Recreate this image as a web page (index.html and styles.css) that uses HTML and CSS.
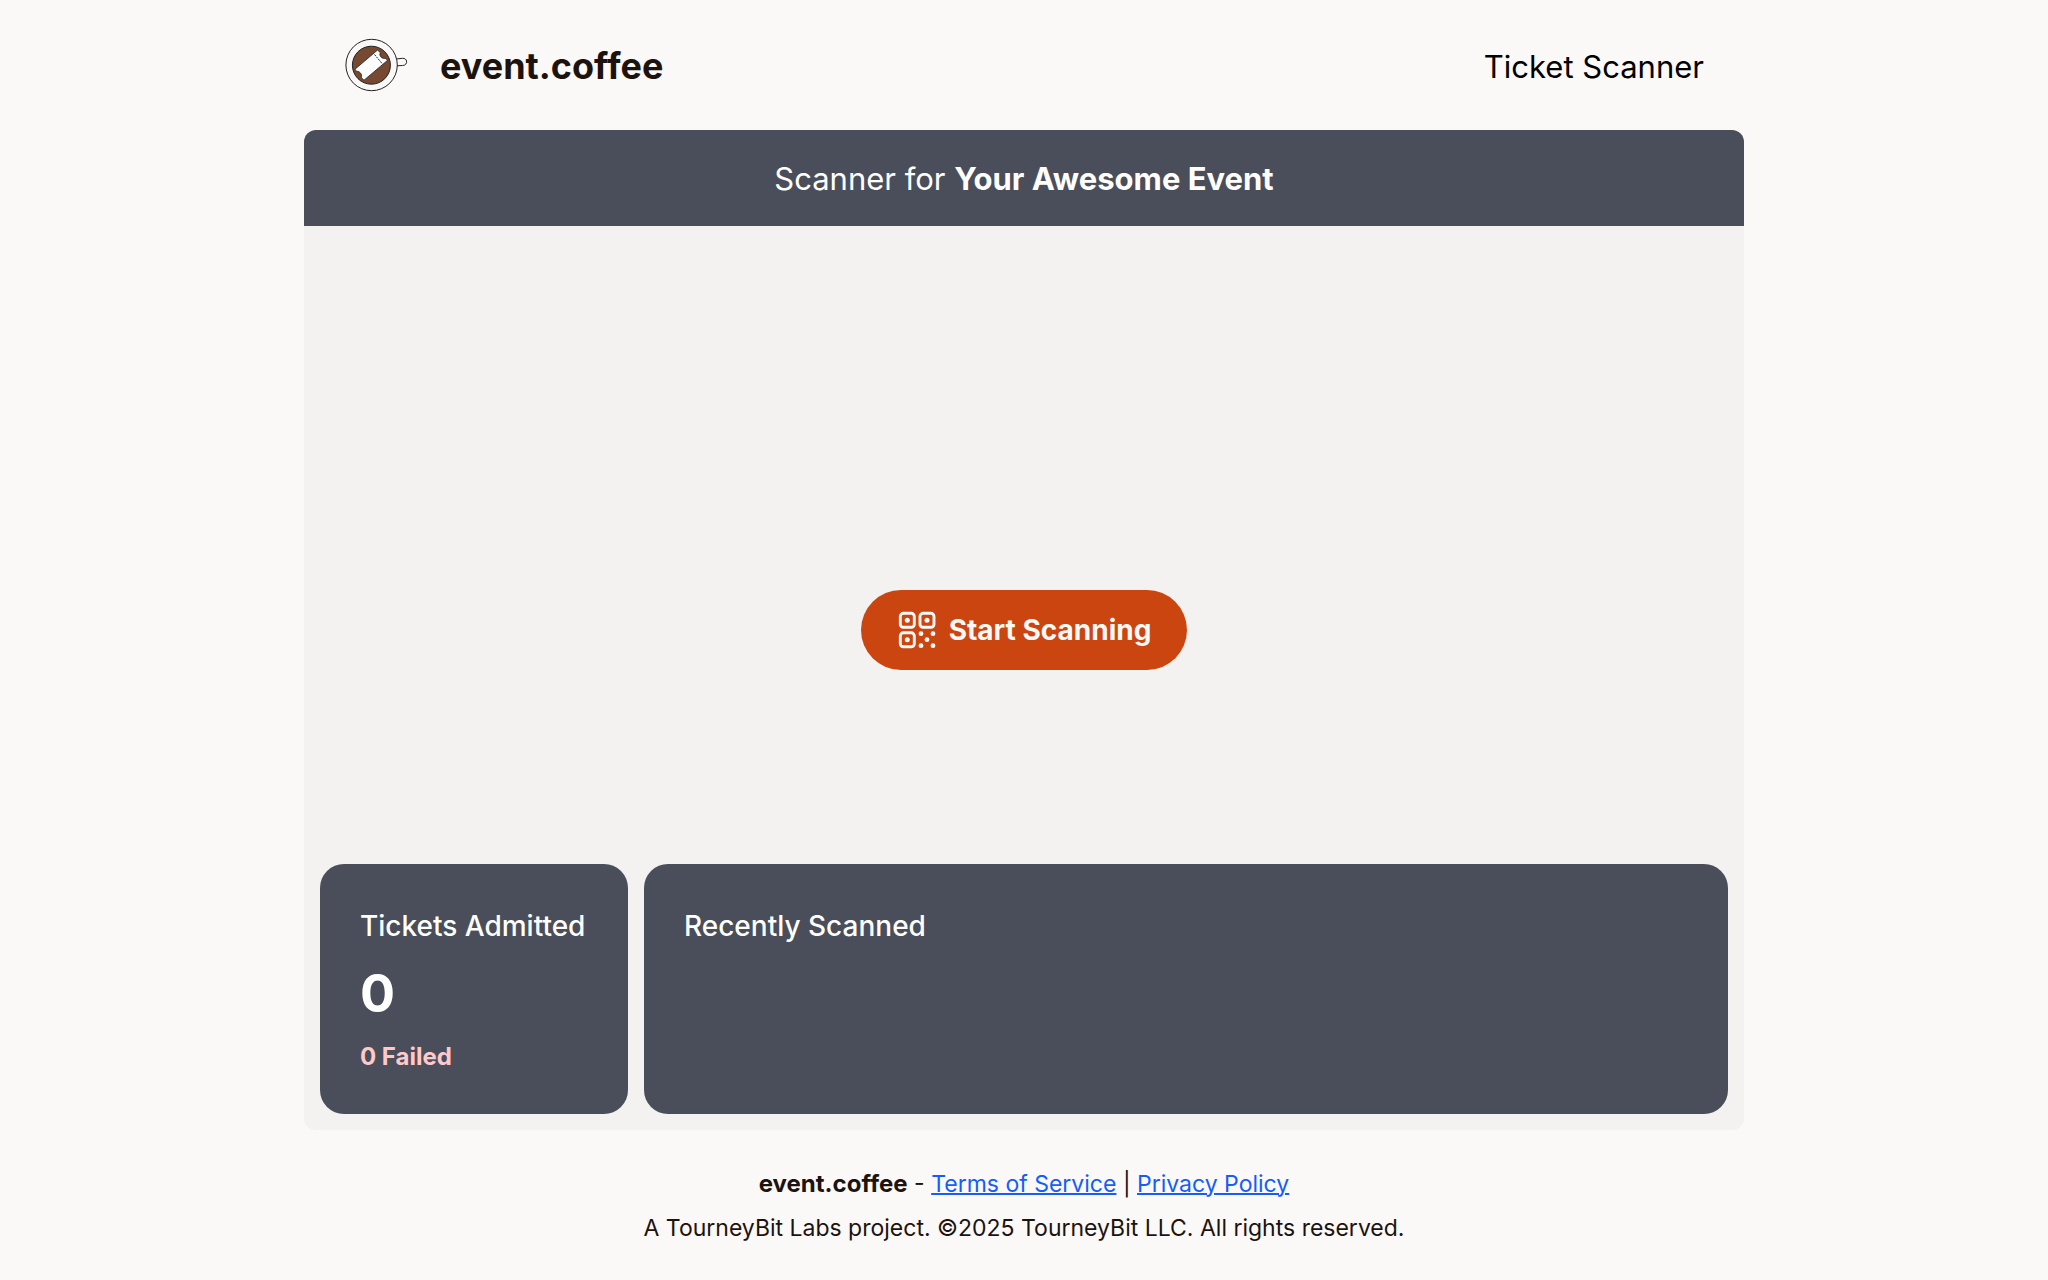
FILE: index.html
```html
<!DOCTYPE html>
<html lang="en">
<head>
  <meta charset="utf-8">
  <meta name="viewport" content="width=device-width, initial-scale=1">
  <title>Ticket Scanner - event.coffee</title>
  <link rel="stylesheet" href="styles.css">
</head>
<body>
  <header class="site-header">
    <div class="brand">
      <svg class="brand-logo" viewBox="0 -1 64 60" fill="none" stroke="#222" aria-hidden="true">
        <path d="M53 21.900L58.500 21.300C64 21 64 28.600 58.500 28.500L53 28.800"/>
        <circle cx="27.600" cy="28" r="25.700"/>
        <circle cx="27.400" cy="28.200" r="19" fill="#774930"/>
        <path d="M33.600 13L11 32.200L12.600 34.400C15 34 18.500 36.500 17.300 40.500L20 43.200L43.300 23.600L42 21.300C38.500 22.500 34.500 19 36.300 15.800Z" fill="#fff" stroke-width=".8"/>
        <path d="M30.500 17.500L38.500 27" stroke-dasharray="2 1"/>
      </svg>
      <span class="brand-name">event.coffee</span>
    </div>
    <span class="page-name">Ticket Scanner</span>
  </header>

  <main class="scanner">
    <h1 class="scanner-title">Scanner for <strong>Your Awesome Event</strong></h1>
    <button class="scan-button" type="button">
      <svg class="scan-icon" viewBox="0 0 40 40" fill="none" stroke="currentColor" stroke-width="2.900" aria-hidden="true">
        <rect x="3.300" y="3.300" width="14" height="14" rx="3"/>
        <rect x="23" y="3.300" width="14" height="14" rx="3"/>
        <rect x="3.300" y="22.800" width="14" height="14" rx="3"/>
        <g fill="currentColor" stroke="none">
          <circle cx="10.300" cy="10.300" r="2.500"/>
          <circle cx="30" cy="10.300" r="2.500"/>
          <circle cx="10.300" cy="29.800" r="2.500"/>
          <circle cx="24" cy="23.700" r="2.400"/>
          <circle cx="36" cy="23.700" r="2.400"/>
          <circle cx="30" cy="29.700" r="2.400"/>
          <circle cx="24" cy="35.700" r="2.400"/>
          <circle cx="36" cy="35.700" r="2.400"/>
        </g>
      </svg>
      Start Scanning
    </button>
    <div class="stats">
      <section class="card">
        <h2 class="card-title">Tickets Admitted</h2>
        <p class="admitted">0</p>
        <p class="failed">0 Failed</p>
      </section>
      <section class="card card-recent">
        <h2 class="card-title">Recently Scanned</h2>
      </section>
    </div>
  </main>

  <footer class="site-footer">
    <p><strong>event.coffee</strong> - <a href="#terms">Terms of Service</a> | <a href="#privacy">Privacy Policy</a></p>
    <p>A TourneyBit Labs project. ©2025 TourneyBit LLC. All rights reserved.</p>
  </footer>
</body>
</html>
```
FILE: styles.css
```css
* {
  box-sizing: border-box;
}

html {
  background: #faf9f7;
}

body {
  display: flex;
  flex-direction: column;
  min-height: 100vh;
  max-width: 1440px;
  margin: 0 auto;
  font-family: Inter, "Open Sans", sans-serif;
  color: #1c130e;
}

h1,
h2,
p {
  margin: 0;
}

.site-header {
  display: flex;
  align-items: center;
  justify-content: space-between;
  padding: 36px 40px 34px;
}

.brand {
  display: flex;
  align-items: center;
  gap: 32px;
}

.brand-logo {
  width: 64px;
  height: 60px;
}

.brand-name {
  font-size: 36px;
  font-weight: 700;
}

.page-name {
  font-size: 31px;
  color: #000;
}

.scanner {
  flex: 1;
  display: grid;
  grid-template-rows: 96px minmax(160px, 1fr) auto;
  border-radius: 12px;
  overflow: hidden;
  background: #f3f2f0;
}

.scanner-title {
  grid-area: 1 / 1;
  padding-top: 2px;
  background: #4a4e5a;
  color: #fff;
  font-size: 31px;
  font-weight: 400;
  line-height: 94px;
  text-align: center;
}

.scan-button {
  grid-area: 1 / 1 / 4 / 2;
  place-self: center;
  display: flex;
  align-items: center;
  gap: 12px;
  height: 80px;
  padding: 0 36px;
  border: 0;
  border-radius: 40px;
  background: #cb4510;
  color: #fbf8f6;
  font: inherit;
  font-size: 28px;
  font-weight: 700;
  cursor: pointer;
}

.scan-icon {
  width: 40px;
  height: 40px;
}

.stats {
  grid-area: 3 / 1;
  display: flex;
  gap: 16px;
  padding: 16px;
}

.card {
  min-width: 308px;
  padding: 40px;
  border-radius: 24px;
  background: #4a4e5a;
  color: #fff;
}

.card-recent {
  flex: 1;
}

.card-title {
  font-size: 28px;
  font-weight: 500;
  line-height: 44px;
}

.admitted {
  font-size: 52px;
  font-weight: 700;
  line-height: 92px;
}

.failed {
  font-size: 24px;
  font-weight: 700;
  line-height: 34px;
  color: #ffc9c9;
}

.site-footer {
  padding: 32px 16px 30px;
  font-size: 23px;
  line-height: 44px;
  text-align: center;
}

.site-footer strong {
  font-size: 24px;
  line-height: 1;
}

.site-footer a {
  color: #155dfc;
  text-decoration-thickness: 2px;
}
```
